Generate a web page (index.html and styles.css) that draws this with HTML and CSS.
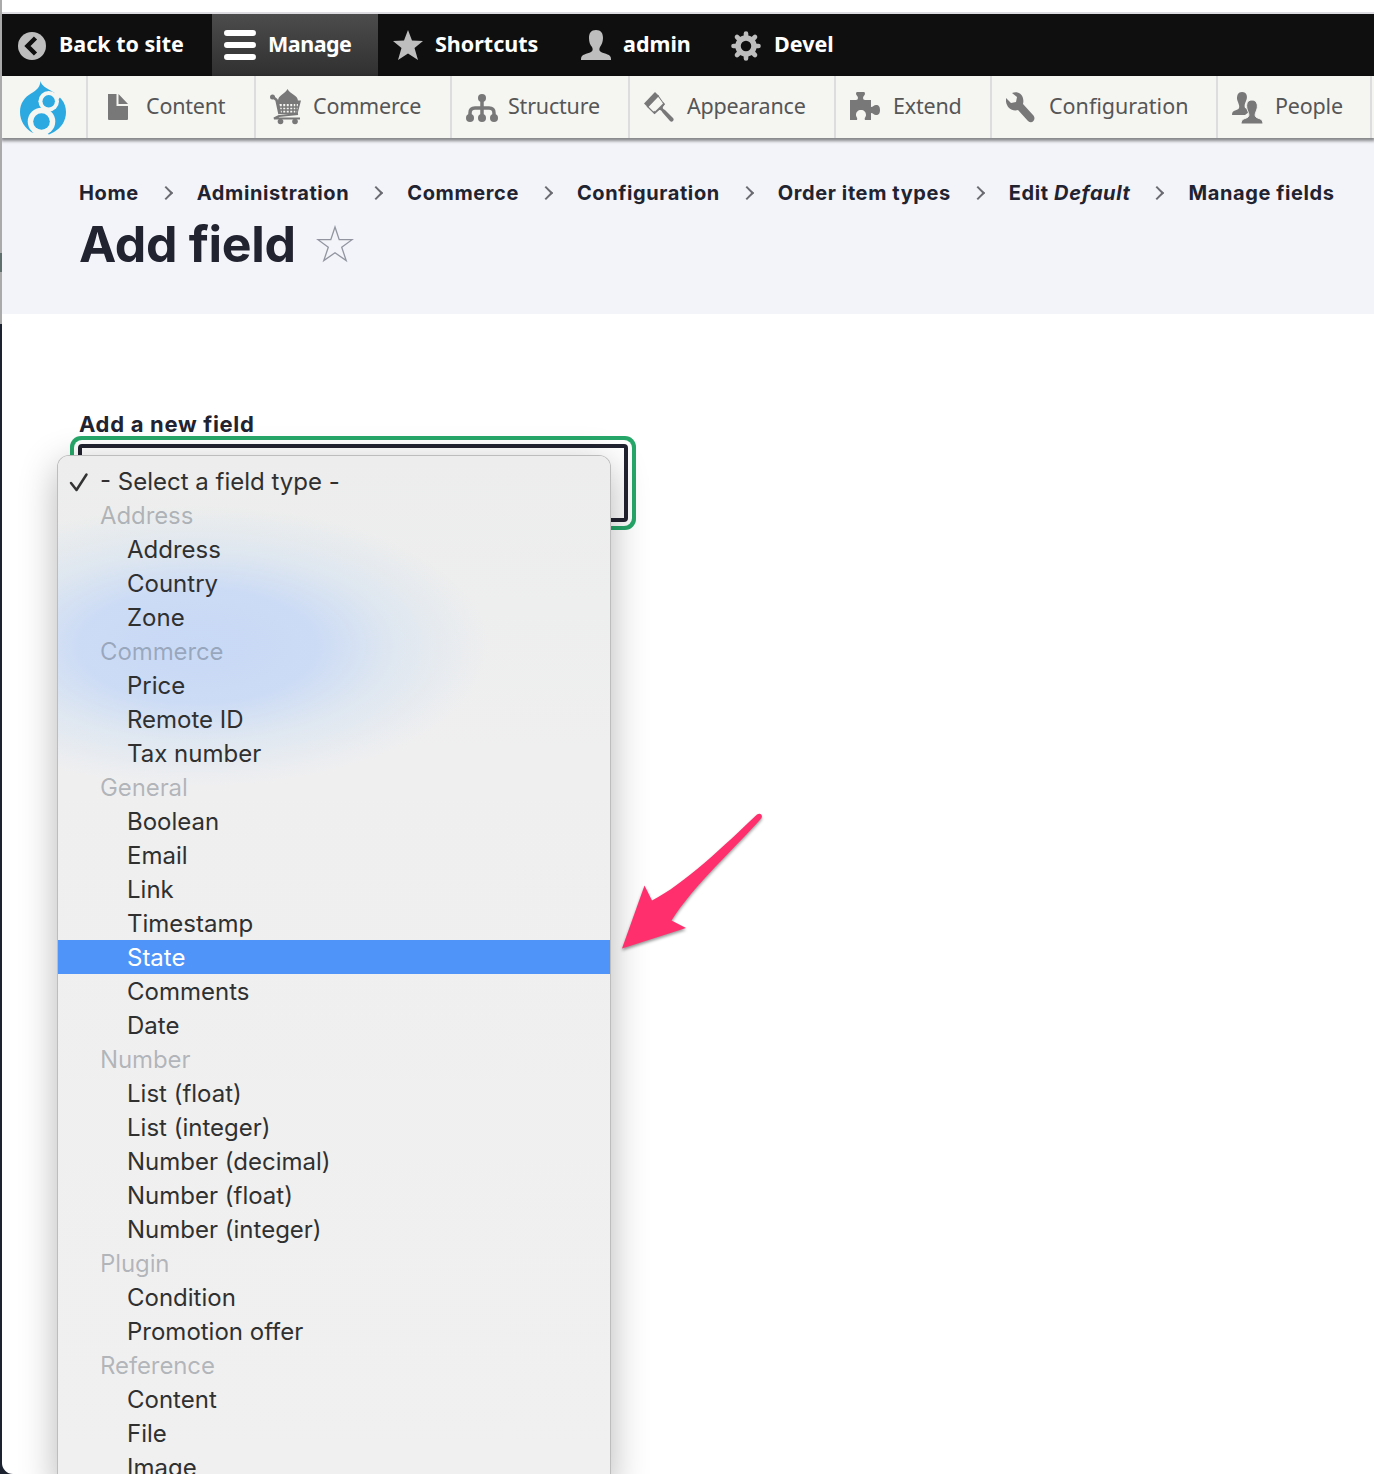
FILE: index.html
```html
<!DOCTYPE html>
<html lang="en">
<head>
<meta charset="utf-8">
<title>Add field</title>
<link rel="stylesheet" href="styles.css">
</head>
<body>
<div class="desktop">
<div class="window">
<nav class="bar">
  <a class="tab back"><svg width="28" height="28" viewBox="0 0 28 28"><circle cx="14" cy="14" r="14" fill="#bebebe"/><path d="M17.500 6 9.500 14l8 8" fill="none" stroke="#0f0f0f" stroke-width="4.500"/></svg><span>Back to site</span></a>
  <a class="tab manage"><svg width="32" height="30" viewBox="0 0 32 30"><path d="M3 3h26M3 15h26M3 27h26" stroke="#fff" stroke-width="6" stroke-linecap="round"/></svg><span>Manage</span></a>
  <a class="tab shortcuts"><svg width="30" height="30" viewBox="0 0 30 30"><path d="m15 0 4 10.500 11 .5-8.500 7L25 30l-10-6.500L5 30l3.500-12L0 11l11-.5z" fill="#bebebe"/></svg><span>Shortcuts</span></a>
  <a class="tab admin"><svg width="30" height="30" viewBox="0 0 30 30"><path d="M15 0c5 0 7 3 7 8 0 4-1.500 7-3 9-1 2-1 4 1 5 4 2 10 2 10 7v1H0v-1c0-5 6-5 10-7 2-1 2-3 1-5-2-2-3-5-3-9 0-5 2-8 7-8z" fill="#bebebe"/></svg><span>admin</span></a>
  <a class="tab devel"><svg width="30" height="30" viewBox="-15 -15 30 30"><circle r="8" fill="none" stroke="#bebebe" stroke-width="5.500"/><path d="M0-9v-3.500M0 9v3.500M-9 0h-3.500M9 0h3.500M-6.500-6.500l-2.500-2.500M6.500 6.500 9 9M-6.500 6.500-9 9M6.500-6.500 9-9" stroke="#bebebe" stroke-width="4.600" stroke-linecap="round"/></svg><span>Devel</span></a>
</nav>
<nav class="tray">
  <a class="logo"><svg width="46" height="54" viewBox="0 0 46 54"><path d="M20.500 0c1 5 6 7 10.500 9.700C40 15 46 21 46 31c0 9-5 16-12 20l-5 2.500L22 50l-10 1.500C5 47 0 40 0 31c0-9 5-15 11-18.500C17 9 20 6 20.500 0z" fill="#2ba9e0"/><circle cx="28.700" cy="20.300" r="10.300" fill="#f5f5f2"/><path d="m34 12 5-1 2 4-3 4z" fill="#f5f5f2"/><circle cx="21.500" cy="40.500" r="13.800" fill="#f5f5f2"/><circle cx="28.700" cy="20.300" r="6.200" fill="#2ba9e0"/><circle cx="21.500" cy="40.500" r="8.300" fill="#2ba9e0"/></svg></a>
  <a class="item content"><svg width="20" height="26" viewBox="0 0 20 26"><path d="M0 0h8.500v12H20v13q0 1-1 1H1q-1 0-1-1zM10.500 0 20 10h-9.500z" fill="#787878"/></svg><span>Content</span></a>
  <a class="item commerce"><svg width="32" height="36" viewBox="0 0 32 36"><path d="m2.500 7.500 4 3.500 3 14" fill="none" stroke="#787878" stroke-width="2.500"/><circle cx="2.500" cy="8" r="2.500" fill="#787878"/><path d="M8 12c0-6 7-7 9.500-12C20 5 28 6 28 12zM6 11.500h25L27.500 25h-18z" fill="#787878"/><path d="M9.500 15h18.500l-1 8.500H11z" fill="#f5f5f2"/><path d="M9 18h20M10 21h18M12.500 14v10M16 14v10M19.500 14v10M23 14v10M26 14v10" stroke="#787878" stroke-width="1.500"/><path d="M28 25 9 27l-5 2.500h26" fill="none" stroke="#787878" stroke-width="2"/><circle cx="10.500" cy="32.500" r="2.800" fill="#787878"/><circle cx="25" cy="32.500" r="2.800" fill="#787878"/></svg><span>Commerce</span></a>
  <a class="item structure"><svg class="low" width="32" height="28" viewBox="0 0 32 28"><path d="M16 4v20M4 24v-5q0-5 5-5h14q5 0 5 5v5" fill="none" stroke="#787878" stroke-width="3.500"/><circle cx="16" cy="4" r="4" fill="#787878"/><circle cx="4" cy="24" r="4" fill="#787878"/><circle cx="16" cy="24" r="4" fill="#787878"/><circle cx="28" cy="24" r="4" fill="#787878"/></svg><span>Structure</span></a>
  <a class="item appearance"><svg width="30" height="30" viewBox="0 0 30 30"><path d="M11 0 0 11.500l4 4L15 4z" fill="#787878"/><path d="m3 14 7.500 7.500 9.500-9L13.500 3" fill="none" stroke="#787878" stroke-width="1.200"/><path d="m10.500 22 4-3.500c2-1 3 0 4 2l7.500 8.500c2 2 5-1 3-3l-8-8c-2-1-3-2-1.500-4L21 12l-2-2-10 10z" fill="#787878"/><path d="m5.500 14.500 9-9 4.500 6-8 8z" fill="#f5f5f2"/></svg><span>Appearance</span></a>
  <a class="item extend"><svg class="high" width="30" height="28" viewBox="0 0 30 28"><path d="M7 0h7q1 0 1 2c0 1-2 2-2 4q0 2 2 2h6v7c2 0 3-2 5-2 3 0 4 2 4 5s-1 5-4 5c-2 0-3-2-5-2v7h-6c-1-2 1-3 1-5 0-3-2-5-5-5s-5 2-5 5c0 2 2 3 1 5H0V8h6q2 0 2-2c0-2-2-3-2-4q0-2 1-2z" fill="#787878"/></svg><span>Extend</span></a>
  <a class="item configuration"><svg width="30" height="31" viewBox="0 0 30 31"><path d="M6 1c7-3 13 3 11 11l10 11c4 4-1 10-5 6L12 18C5 20-1 14 0 6l5 5 5-1 1-5z" fill="#787878"/></svg><span>Configuration</span></a>
  <a class="item people"><svg class="low" width="31" height="32" viewBox="0 0 31 32"><path d="M10 0c5 0 6 5 4 9-1 2-2 5-1 7 2 1 4 1 4 4l-4 3H0c0-6 6-4 7-7 1-2-1-5-2-9 0-4 1-7 5-7z" fill="#787878"/><path d="M20 8c5 0 6 5 5 9-1 3-3 6-1 8s7 1 7 7H9c0-6 5-5 7-7s0-5-1-8c-1-5 0-9 5-9z" fill="#787878" stroke="#f5f5f2" stroke-width="1"/></svg><span>People</span></a>
</nav>
<header class="head">
  <div class="crumbs">
    <a>Home</a><a>Administration</a><a>Commerce</a><a>Configuration</a><a>Order item types</a><a>Edit <em>Default</em></a><a>Manage fields</a>
  </div>
  <div class="title"><h1>Add field</h1><svg width="38" height="38" viewBox="0 0 38 38"><path d="m19 2 4.200 12.700h12.900L25.700 22.300l4.500 13.200L19 27.800 7.800 35.500l4.500-13.200L2 14.700h12.800z" fill="none" stroke="#9295a0" stroke-width="1.300"/></svg></div>
</header>
<main class="main">
  <label class="label">Add a new field</label>
  <div class="select"></div>
</main>
</div>
<div class="menu">
  <div class="row first"><svg class="check" width="20" height="20" viewBox="0 0 20 20"><path d="m2 11 5.500 7L17.500 2.500" fill="none" stroke="#333" stroke-width="2.500" stroke-linecap="round" stroke-linejoin="round"/></svg>- Select a field type -</div>
  <div class="row group">Address</div>
  <div class="row">Address</div>
  <div class="row">Country</div>
  <div class="row">Zone</div>
  <div class="row group">Commerce</div>
  <div class="row">Price</div>
  <div class="row">Remote ID</div>
  <div class="row">Tax number</div>
  <div class="row group">General</div>
  <div class="row">Boolean</div>
  <div class="row">Email</div>
  <div class="row">Link</div>
  <div class="row">Timestamp</div>
  <div class="row active">State</div>
  <div class="row">Comments</div>
  <div class="row">Date</div>
  <div class="row group">Number</div>
  <div class="row">List (float)</div>
  <div class="row">List (integer)</div>
  <div class="row">Number (decimal)</div>
  <div class="row">Number (float)</div>
  <div class="row">Number (integer)</div>
  <div class="row group">Plugin</div>
  <div class="row">Condition</div>
  <div class="row">Promotion offer</div>
  <div class="row group">Reference</div>
  <div class="row">Content</div>
  <div class="row">File</div>
  <div class="row">Image</div>
</div>
<svg class="arrow" width="150" height="145" viewBox="0 0 150 145"><path d="M7 138.500 29.500 75.500 37 90.500C68 75 110 35 142 4.500c3-2 6 0 4.500 3.500C122 36 78 76 56.500 110.500L71 118z" transform="translate(0 1)" fill="#ff2f6d"/></svg>
</div>
</body>
</html>
```
FILE: styles.css
```css
* { box-sizing: border-box; }
body { margin: 0; background: #fff; font-family: Inter, "Liberation Sans", sans-serif; }
.desktop { position: relative; height: 1474px; overflow: hidden; padding-left: 2px; background: linear-gradient(#aaa 0 253px, #5f6f6c 253px 272px, #aaa 272px 324px, #1d2230 324px); }
.window { height: 1474px; background: #fff; border-bottom-left-radius: 11px; overflow: hidden; padding-top: 12px; }
.bar { height: 64px; display: flex; background: #0f0f0f; border-top: 2px solid #dddde1; font: 700 21.500px/60px "Noto Sans", sans-serif; color: #fff; }
.tab, .item { display: flex; align-items: center; white-space: nowrap; flex: none; }
.tab span, .item span { padding-bottom: 2px; }
.tab svg, .item svg { flex: none; }
.back { width: 210px; padding-left: 16px; gap: 13px; }
.back svg, .devel svg { margin-top: 2px; }
.manage { width: 166px; padding-left: 12px; gap: 12px; background: linear-gradient(#4c4c4c, #303030); letter-spacing: -.5px; }
.shortcuts { width: 188px; padding-left: 15px; gap: 12px; }
.admin { width: 150px; padding-left: 15px; gap: 12px; }
.devel { padding-left: 15px; gap: 13px; }
.tray { position: relative; height: 62px; display: flex; background: #f5f5f2; font: 400 21.500px/60px "Noto Sans", sans-serif; letter-spacing: -.2px; color: #565656; box-shadow: 0 2px 3px 1px rgba(0,0,0,.45); }
.logo { width: 86px; padding: 5px 0 0 18px; border-right: 2px solid #ddd; line-height: 0; flex: none; }
.item { border-right: 2px solid #ddd; }
.item .low { margin-top: 2px; }
.item .high { margin-bottom: 2px; }
.content { width: 168px; padding-left: 20px; gap: 18px; }
.commerce { width: 196px; padding-left: 14px; gap: 11px; }
.structure { width: 178px; padding-left: 14px; gap: 10px; }
.appearance { width: 206px; padding-left: 14px; gap: 13px; }
.extend { width: 156px; padding-left: 14px; gap: 13px; }
.configuration { width: 226px; padding-left: 14px; gap: 13px; letter-spacing: 0; }
.people { width: 154px; padding-left: 14px; gap: 12px; }
.head { height: 176px; background: #f3f4f9; padding: 42px 0 0 77px; color: #222330; }
.crumbs { display: flex; font-size: 20px; line-height: 26px; font-weight: 700; letter-spacing: .6px; white-space: nowrap; }
.crumbs a + a::before { content: ""; display: inline-block; width: 8px; height: 8px; margin: 0 26px 2px 22px; border: solid #6a6b72; border-width: 2px 2px 0 0; transform: rotate(45deg); }
.title { display: flex; align-items: center; gap: 20px; margin-top: 6px; }
h1 { margin: 0; font-size: 50px; line-height: 64px; font-weight: 700; letter-spacing: -.35px; }
.main { padding: 96px 0 0 77px; }
.label { display: block; font-size: 22px; line-height: 28px; font-weight: 700; letter-spacing: .7px; color: #222330; }
.select { width: 550px; height: 78px; margin: 6px 0 0 -1px; border: 4px solid #222330; border-radius: 4px; background: #fff; box-shadow: 0 0 0 4px #fff, 0 0 0 8px #26a769; }
.menu { position: absolute; left: 58px; top: 456px; width: 552px; height: 1030px; padding-top: 8px; border-radius: 11px 11px 0 0; color: #303030; font-size: 24px; line-height: 34px; background: radial-gradient(ellipse 290px 140px at 140px 190px, #c8d9f6 0%, rgba(200,217,246,.9) 40%, rgba(208,224,242,.5) 68%, rgba(230,236,240,0) 100%), linear-gradient(#ecedec, #efeff0 300px, #f0f0f0); box-shadow: 0 0 0 1px #bdbdbd, 0 10px 38px rgba(0,0,0,.3); }
.row { position: relative; height: 34px; padding: 1px 0 0 69px; white-space: nowrap; }
.first, .group { padding-left: 42px; }
.group { color: rgba(60,70,80,.35); letter-spacing: -.1px; }
.active { background: #4f94f8; color: #fff; }
.check { position: absolute; left: 11px; top: 8px; }
.arrow { position: absolute; left: 615px; top: 809px; filter: drop-shadow(0 2px 1.500px rgba(0,0,0,.4)); }
```
